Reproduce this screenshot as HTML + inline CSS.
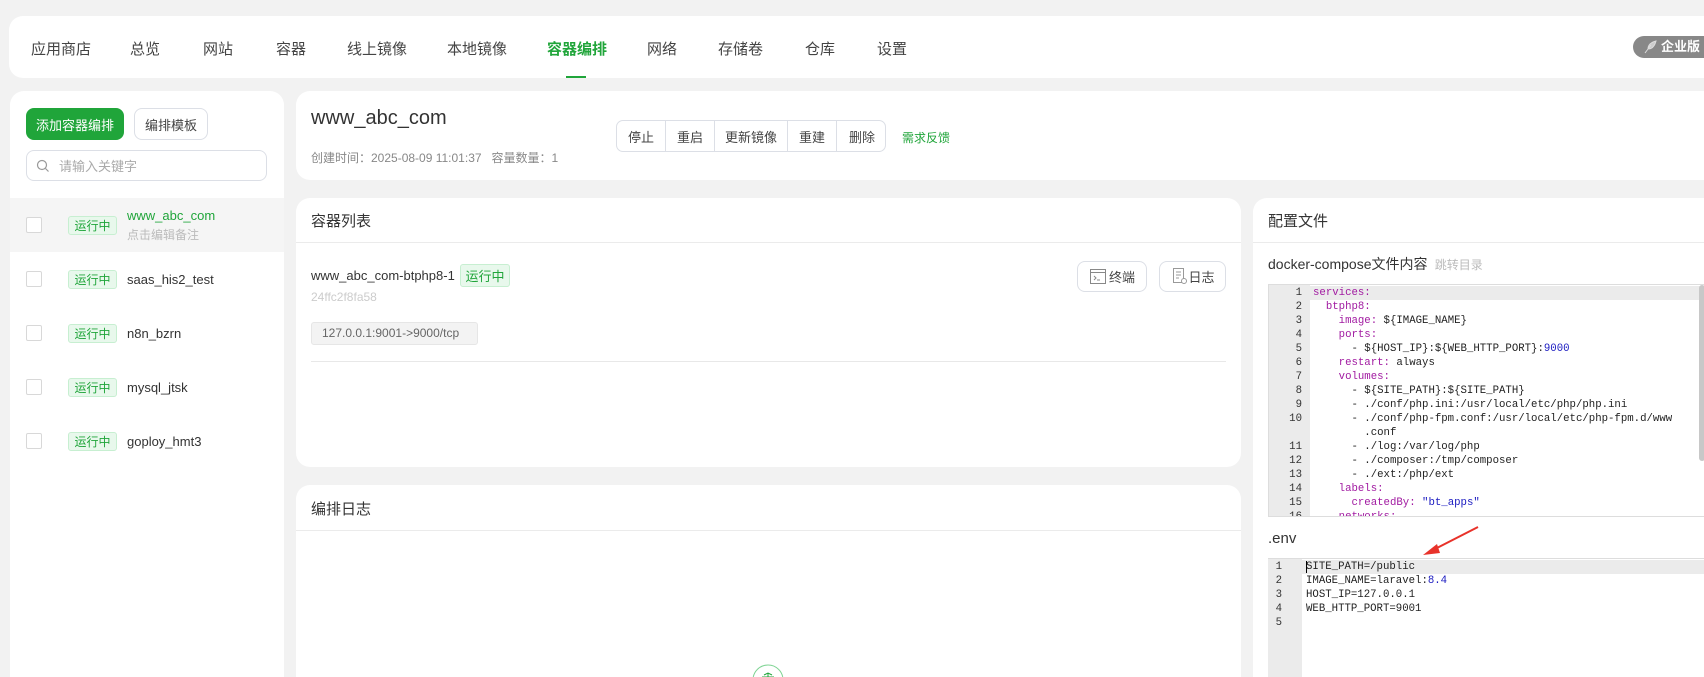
<!DOCTYPE html>
<html><head><meta charset="utf-8"><style>
*{box-sizing:border-box;margin:0;padding:0}
html,body{width:1704px;height:677px;overflow:hidden}
body{background:#f2f2f2;font-family:"Liberation Sans","Noto Sans CJK SC",sans-serif;color:#333}
#w{position:relative;width:1704px;height:677px;overflow:hidden}
.a{position:absolute}
.card{position:absolute;background:#fff;border-radius:14px}
.bt{border-radius:14px 0 0 0}
.nav span{position:absolute;top:38px;font-size:15px;color:#444;white-space:nowrap}
.btn{position:absolute;border:1px solid #dcdfe6;border-radius:8px;font-size:13px;display:flex;align-items:center;justify-content:center;background:#fff}
.tag{position:absolute;background:#e8f8ec;border:1px solid #c7efd1;color:#20a53a;font-size:12px;border-radius:3px;display:flex;align-items:center;justify-content:center}
.cb{position:absolute;width:16px;height:16px;border:1px solid #d8d8d8;border-radius:2px;background:#fff}
.row .n{position:absolute;font-size:13px;color:#333;white-space:nowrap}
.seg{position:absolute;top:0;height:31px;display:flex;align-items:center;justify-content:center;font-size:13px;color:#444;border-right:1px solid #dcdfe6}
.code{font-family:"Liberation Mono",monospace;font-size:10.7px;line-height:14px;white-space:pre}
.g{position:absolute;text-align:right;color:#333}
.k{color:#a11aa1}.b{color:#1a1ac0}
</style></head><body><div id="w">
<div class="card" style="left:9px;top:16px;width:1695px;height:62px;border-radius:14px 0 0 14px"></div>
<div class="nav">
<span style="left:31px">应用商店</span><span style="left:130px">总览</span><span style="left:203px">网站</span><span style="left:276px">容器</span><span style="left:347px">线上镜像</span><span style="left:447px">本地镜像</span><span style="left:547px;color:#20a53a;font-weight:bold">容器编排</span><span style="left:647px">网络</span><span style="left:718px">存储卷</span><span style="left:805px">仓库</span><span style="left:877px">设置</span>
</div>
<div class="a" style="left:566px;top:76px;width:20px;height:2px;background:#20a53a"></div>
<div class="a" style="left:1633px;top:36px;width:71px;height:22px;border-radius:11px 0 0 11px;background:#888;color:#fff;font-size:13px;font-weight:bold;line-height:22px;padding-left:28px;white-space:nowrap;overflow:hidden">企业版</div>
<svg class="a" style="left:1642px;top:39px" width="16" height="16" viewBox="0 0 16 16"><path d="M3 14 L9 6 M6 10 C6 5 10 3 14 2 C13 6 11 10 6 10Z" fill="#ccc" stroke="#ddd" stroke-width="1"/></svg>

<div class="card" style="left:10px;top:91px;width:274px;height:586px;border-radius:14px 14px 0 0"></div>
<div class="a" style="left:26px;top:108px;width:98px;height:32px;background:#20a53a;color:#fff;border-radius:8px;font-size:13px;display:flex;align-items:center;justify-content:center">添加容器编排</div>
<div class="btn" style="left:134px;top:108px;width:74px;height:32px;color:#444">编排模板</div>
<div class="btn" style="left:26px;top:150px;width:241px;height:31px;justify-content:flex-start;padding-left:32px;color:#aaa;font-size:13px">请输入关键字</div>
<svg class="a" style="left:36px;top:159px" width="14" height="14" viewBox="0 0 14 14"><circle cx="6" cy="6" r="4.5" fill="none" stroke="#999" stroke-width="1.2"/><path d="M9.5 9.5 L12.5 12.5" stroke="#999" stroke-width="1.2"/></svg>
<div class="a" style="left:10px;top:198px;width:274px;height:54px;background:#f5f5f5"></div>
<div class="row">
<div class="cb" style="left:26px;top:217px"></div><div class="tag" style="left:68px;top:216px;width:49px;height:19px">运行中</div><div class="n" style="left:127px;top:208px;color:#20a53a">www_abc_com</div><div class="n" style="left:127px;top:226px;color:#bbb;font-size:12px">点击编辑备注</div>
<div class="cb" style="left:26px;top:271px"></div><div class="tag" style="left:68px;top:270px;width:49px;height:19px">运行中</div><div class="n" style="left:127px;top:272px">saas_his2_test</div>
<div class="cb" style="left:26px;top:325px"></div><div class="tag" style="left:68px;top:324px;width:49px;height:19px">运行中</div><div class="n" style="left:127px;top:326px">n8n_bzrn</div>
<div class="cb" style="left:26px;top:379px"></div><div class="tag" style="left:68px;top:378px;width:49px;height:19px">运行中</div><div class="n" style="left:127px;top:380px">mysql_jtsk</div>
<div class="cb" style="left:26px;top:433px"></div><div class="tag" style="left:68px;top:432px;width:49px;height:19px">运行中</div><div class="n" style="left:127px;top:434px">goploy_hmt3</div>
</div>

<div class="card" style="left:296px;top:91px;width:1408px;height:89px;border-radius:14px 0 0 14px"></div>
<div class="a" style="left:311px;top:107px;font-size:20px;color:#333">www_abc_com</div>
<div class="a" style="left:311px;top:149px;font-size:12px;color:#888">创建时间：2025-08-09 11:01:37&nbsp;&nbsp;&nbsp;容量数量：1</div>
<div class="a" style="left:616px;top:120px;width:270px;height:32px;border:1px solid #dcdfe6;border-radius:7px;background:#fff;overflow:hidden">
<div class="seg" style="left:0;width:49px">停止</div><div class="seg" style="left:49px;width:49px">重启</div><div class="seg" style="left:98px;width:73px">更新镜像</div><div class="seg" style="left:171px;width:49px">重建</div><div class="seg" style="left:220px;width:50px;border:none">删除</div>
</div>
<div class="a" style="left:902px;top:129px;font-size:12px;color:#20a53a">需求反馈</div>

<div class="card" style="left:296px;top:198px;width:945px;height:269px"></div>
<div class="a" style="left:311px;top:210px;font-size:15px;color:#333">容器列表</div>
<div class="a" style="left:296px;top:242px;width:945px;height:1px;background:#ebebeb"></div>
<div class="a" style="left:311px;top:268px;font-size:13px">www_abc_com-btphp8-1</div>
<div class="tag" style="left:460px;top:264px;width:50px;height:23px;font-size:13px">运行中</div>
<div class="a" style="left:311px;top:290px;font-size:12px;color:#ccc">24ffc2f8fa58</div>
<div class="a" style="left:311px;top:322px;width:167px;height:23px;background:#f3f3f3;border:1px solid #e6e6e6;border-radius:3px;font-size:12px;color:#666;line-height:21px;padding-left:10px">127.0.0.1:9001-&gt;9000/tcp</div>
<div class="a" style="left:311px;top:361px;width:915px;height:1px;background:#e8e8e8"></div>
<div class="btn" style="left:1077px;top:261px;width:70px;height:31px;color:#444;padding-left:20px">终端</div>
<svg class="a" style="left:1090px;top:269px" width="16" height="15" viewBox="0 0 16 15"><rect x="0.5" y="0.5" width="15" height="14" fill="none" stroke="#888"/><path d="M0.5 3.5H15.5" stroke="#888"/><path d="M4 7 L6 9 L4 11 M7 11 H10" fill="none" stroke="#888"/></svg>
<div class="btn" style="left:1159px;top:261px;width:67px;height:31px;color:#444;padding-left:18px">日志</div>
<svg class="a" style="left:1173px;top:268px" width="14" height="16" viewBox="0 0 14 16"><rect x="0.5" y="0.5" width="10" height="14" fill="none" stroke="#999"/><path d="M3 4H8M3 7H8M3 10H6" stroke="#999"/><circle cx="11" cy="13" r="2.5" fill="#fff" stroke="#999"/></svg>

<div class="card" style="left:296px;top:485px;width:945px;height:192px;border-radius:14px 14px 0 0"></div>
<div class="a" style="left:311px;top:498px;font-size:15px;color:#333">编排日志</div>
<div class="a" style="left:296px;top:530px;width:945px;height:1px;background:#ebebeb"></div>
<svg class="a" style="left:748px;top:657px" width="40" height="20" viewBox="0 0 40 20"><circle cx="20" cy="23" r="15" fill="none" stroke="#7fd494" stroke-width="1"/><path d="M14 20 H26 M20 16 V20 M16 18 L20 16 L24 18" fill="none" stroke="#20a53a" stroke-width="1"/></svg>

<div class="card" style="left:1253px;top:198px;width:451px;height:479px;border-radius:14px 0 0 0"></div>
<div class="a" style="left:1268px;top:210px;font-size:15px;color:#333">配置文件</div>
<div class="a" style="left:1253px;top:242px;width:451px;height:1px;background:#ebebeb"></div>
<div class="a" style="left:1268px;top:254px;font-size:14px;color:#333">docker-compose文件内容 <span style="font-size:12px;color:#bbb">&nbsp;跳转目录</span></div>
<div class="a" style="left:1268px;top:284px;width:436px;height:233px;border:1px solid #ddd;border-right:none;background:#fff;overflow:hidden">
<div class="a" style="left:0;top:0;width:41px;height:240px;background:#ebebeb"></div>
<div class="a" style="left:0;top:1px;width:440px;height:14px;background:#ebebeb"></div>
<div class="code g" style="left:0;top:1px;width:33px">1
2
3
4
5
6
7
8
9
10

11
12
13
14
15
16</div>
<div class="code a" style="left:44px;top:1px;color:#222"><span class="k">services:</span>
  <span class="k">btphp8:</span>
    <span class="k">image:</span> ${IMAGE_NAME}
    <span class="k">ports:</span>
      - ${HOST_IP}:${WEB_HTTP_PORT}:<span class="b">9000</span>
    <span class="k">restart:</span> always
    <span class="k">volumes:</span>
      - ${SITE_PATH}:${SITE_PATH}
      - ./conf/php.ini:/usr/local/etc/php/php.ini
      - ./conf/php-fpm.conf:/usr/local/etc/php-fpm.d/www
        .conf
      - ./log:/var/log/php
      - ./composer:/tmp/composer
      - ./ext:/php/ext
    <span class="k">labels:</span>
      <span class="k">createdBy:</span> <span class="b">"bt_apps"</span>
    <span class="k">networks:</span></div>
<div class="a" style="left:430px;top:0;width:6px;height:176px;background:#c8c8c8;border-radius:3px"></div>
</div>
<div class="a" style="left:1268px;top:530px;font-size:15px;color:#333">.env</div>
<div class="a" style="left:1268px;top:558px;width:436px;height:119px;border-top:1px solid #ddd;background:#fff;overflow:hidden">
<div class="a" style="left:0;top:0;width:34px;height:119px;background:#ebebeb"></div>
<div class="a" style="left:0;top:1px;width:440px;height:14px;background:#ebebeb"></div>
<div class="code g" style="left:0;top:1px;width:14px">1
2
3
4
5</div>
<div class="code a" style="left:38px;top:1px;color:#222">SITE_PATH=/public
IMAGE_NAME=laravel:<span class="b">8.4</span>
HOST_IP=127.0.0.1
WEB_HTTP_PORT=9001</div>
<div class="a" style="left:38px;top:2px;width:1px;height:12px;background:#000"></div>
</div>
<svg class="a" style="left:1415px;top:522px" width="70" height="40" viewBox="0 0 70 40"><path d="M63 5 L18 28" stroke="#e8322a" stroke-width="2"/><path d="M8 33 L22 22 L25 31 Z" fill="#e8322a"/></svg>
</div></body></html>
